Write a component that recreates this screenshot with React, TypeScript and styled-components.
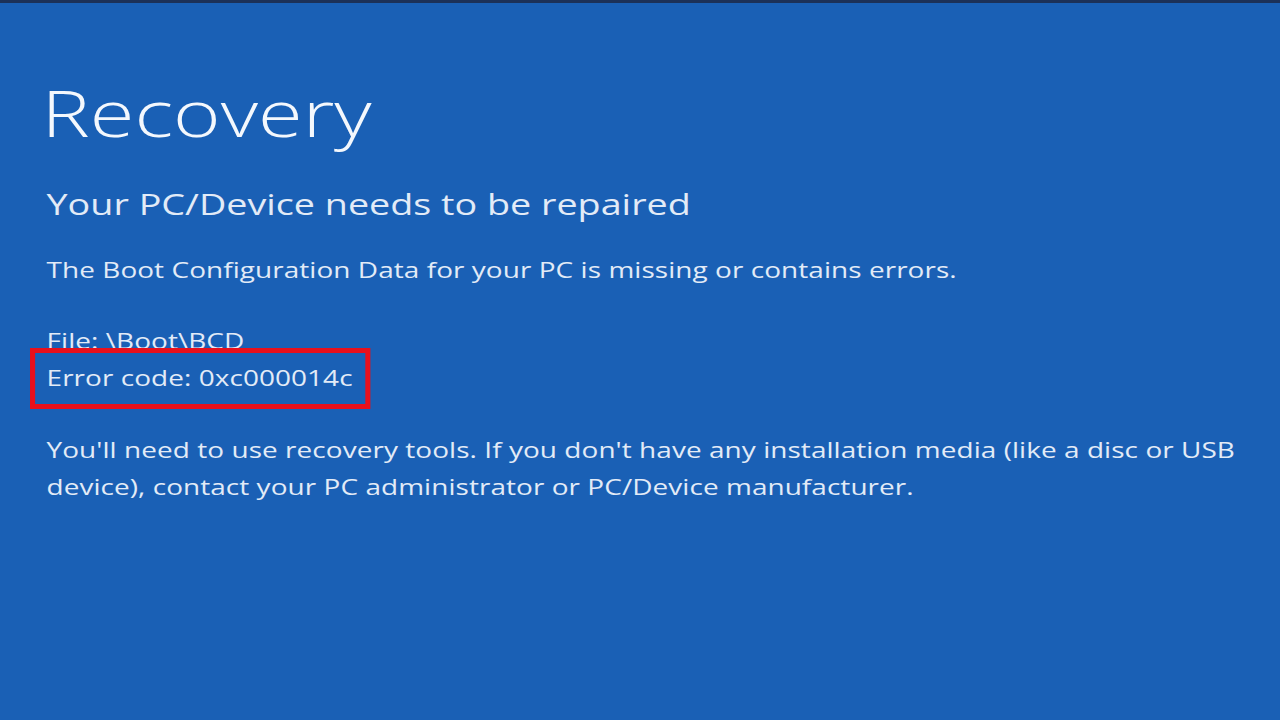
import React from 'react';
import styled, { createGlobalStyle } from 'styled-components';

const GlobalStyle = createGlobalStyle`
  html, body {
    margin: 0;
    padding: 0;
    background: #1a60b5;
  }
  body {
    font-family: "Open Sans", "Noto Sans", "Liberation Sans", sans-serif;
  }
`;

const STRETCH = 1.27;

const Screen = styled.div`
  width: 1280px;
  height: 720px;
  box-sizing: border-box;
  background: #1a60b5;
  border-top: 3px solid #1c3158;
  color: #e2ebf7;
  padding: 78px 0 0 44px;
  overflow: hidden;
`;

// the recovery screen is shown horizontally stretched, as on a wide monitor
const Column = styled.div`
  width: ${Math.round(1230 / STRETCH)}px;
  transform: scaleX(${STRETCH});
  transform-origin: 0 0;
`;

const Title = styled.h1`
  margin: 0 0 0 -2px;
  font-size: 64px;
  line-height: 63px;
  font-weight: 300;
  color: #f4f8fd;
`;

const Subtitle = styled.h2`
  margin: 40px 0 0 2px;
  font-size: 29.7px;
  line-height: 40px;
  font-weight: 400;
`;

const Text = styled.p<{ $gap?: number }>`
  margin: ${(p) => p.$gap ?? 0}px 0 0 2px;
  font-size: 22px;
  line-height: 37px;
  font-weight: 400;
  letter-spacing: 0.05px;
  max-width: 955px;
`;

const Marked = styled.span`
  position: relative;
  display: inline-block;

  &::after {
    content: '';
    position: absolute;
    top: -11px;
    bottom: -13px;
    left: -13px;
    right: -14px;
    border-style: solid;
    border-color: #e8101c;
    border-width: 5px 4px;
    pointer-events: none;
  }
`;

export default function App() {
  return (
    <>
      <GlobalStyle />
      <Screen>
        <Column>
          <Title>Recovery</Title>
          <Subtitle>Your PC/Device needs to be repaired</Subtitle>
          <Text $gap={27}>The Boot Configuration Data for your PC is missing or contains errors.</Text>
          <Text $gap={34}>File: \Boot\BCD</Text>
          <Text>
            <Marked>Error code: 0xc000014c</Marked>
          </Text>
          <Text $gap={35}>
            You'll need to use recovery tools. If you don't have any installation media (like a disc or USB
            device), contact your PC administrator or PC/Device manufacturer.
          </Text>
        </Column>
      </Screen>
    </>
  );
}
